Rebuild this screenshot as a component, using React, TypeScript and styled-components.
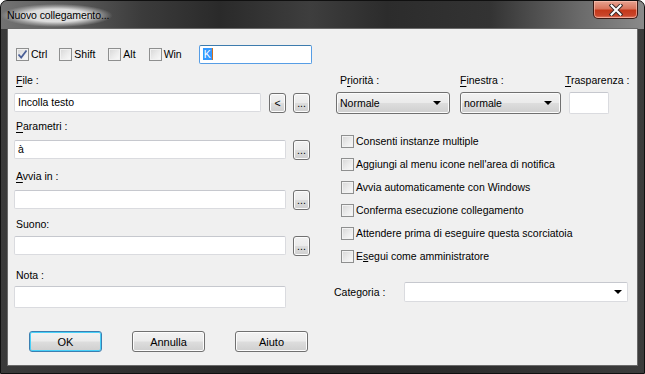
import React from 'react';
import styled, { createGlobalStyle } from 'styled-components';

const GlobalStyle = createGlobalStyle`
  html, body {
    margin: 0;
    padding: 0;
    background: #ffffff;
  }
  body {
    font-family: "Liberation Sans", Arial, sans-serif;
  }
`;

const FONT = `"Liberation Sans", Arial, sans-serif`;

const Window = styled.div`
  width: 645px;
  height: 374px;
  box-sizing: border-box;
  display: flex;
  flex-direction: column;
  border-radius: 7px 7px 0 0;
  border: 1px solid #101010;
  background: linear-gradient(90deg, #3a3a3a 0%, #262626 40%, #2c2c2c 70%, #3c3c3c 100%);
  overflow: hidden;
`;

const TitleBar = styled.div`
  height: 28px;
  flex: none;
  display: flex;
  justify-content: space-between;
  align-items: flex-start;
  background: linear-gradient(
    90deg,
    #727272 0%,
    #5e5e5e 10%,
    #3b3b3b 22%,
    #2a2a2a 34%,
    #3e3e3e 48%,
    #2c2c2c 60%,
    #333333 76%,
    #6a6a6a 90%,
    #8a8a8a 100%
  );
`;

const Title = styled.div`
  margin: 3px 0 0 0;
  padding: 5px 16px 6px 6px;
  font-family: ${FONT};
  font-size: 10.5px;
  letter-spacing: -0.1px;
  color: #000;
  background: radial-gradient(ellipse closest-side at 45% 50%, rgba(228, 228, 228, 0.95) 55%, rgba(200, 200, 200, 0.5) 80%, rgba(120, 120, 120, 0) 100%);
`;

const CloseButton = styled.div`
  width: 45px;
  height: 18px;
  margin-right: 6px;
  box-sizing: border-box;
  border: 1px solid #3b1a14;
  border-top: none;
  border-radius: 0 0 5px 5px;
  background: linear-gradient(180deg, #e7a391 0%, #d9755d 45%, #c4381a 55%, #c9452a 85%, #e0806a 100%);
  box-shadow: inset 0 0 0 1px rgba(255, 200, 185, 0.6);
  display: flex;
  align-items: center;
  justify-content: center;
`;

const Client = styled.div`
  flex: 1;
  margin: 0 7px 8px 7px;
  background: #f0f0f0;
  box-shadow: 0 0 0 1px #6a6a6a;
  padding: 16px 0 0 0;
  box-sizing: border-box;
  font-family: ${FONT};
  font-size: 10.5px;
  color: #000;
`;

const KeyRow = styled.div`
  display: flex;
  align-items: center;
  height: 19px;
  padding-left: 8px;
`;

const Check = styled.label<{ $gap?: number }>`
  display: flex;
  align-items: center;
  gap: 2px;
  margin-right: ${(p) => p.$gap ?? 12}px;
  line-height: 13px;
  white-space: nowrap;
`;

const Box = styled.span`
  width: 13px;
  height: 13px;
  box-sizing: border-box;
  flex: none;
  border: 1px solid #8e8f8f;
  background: linear-gradient(135deg, #d6d6d6 0%, #ececec 55%, #fafafa 100%);
  box-shadow: inset 0 0 0 1px #f2f2f2;
  display: flex;
  align-items: center;
  justify-content: center;
`;

const HotkeyInput = styled.div`
  width: 113px;
  height: 19px;
  box-sizing: border-box;
  margin-left: 5px;
  border: 1px solid #569de5;
  border-top-color: #3d7bad;
  border-radius: 2px;
  background: #fff;
  padding: 2px 3px;
  line-height: 13px;
`;

const Selected = styled.span`
  background: #3399ff;
  color: #fff;
  padding: 0 1px;
  border-right: 1px solid #d07020;
`;

const Columns = styled.div`
  display: grid;
  grid-template-columns: 296px 294px;
  column-gap: 24px;
  padding-left: 6px;
  margin-top: 10px;
`;

const Column = styled.div`
  display: flex;
  flex-direction: column;
`;

const Field = styled.div<{ $top?: number; $gap?: number }>`
  display: flex;
  flex-direction: column;
  gap: ${(p) => p.$gap ?? 6}px;
  margin-top: ${(p) => p.$top ?? 0}px;
`;

const Label = styled.div<{ $shift?: number }>`
  line-height: 13px;
  height: 13px;
  white-space: nowrap;
  padding-left: ${(p) => p.$shift ?? 2}px;
  u {
    text-decoration-thickness: 1px;
    text-underline-offset: 2px;
  }
`;

const InputRow = styled.div`
  display: flex;
  align-items: flex-start;
`;

const TextBox = styled.div<{ $w: number; $h?: number; $indent?: number }>`
  width: ${(p) => p.$w}px;
  height: ${(p) => p.$h ?? 19}px;
  margin-left: ${(p) => p.$indent ?? 0}px;
  box-sizing: border-box;
  border: 1px solid #dadbdf;
  border-top-color: #c6c8ce;
  border-radius: 2px;
  background: #fff;
  padding: 2px 3px;
  line-height: 13px;
  white-space: nowrap;
`;

const SmallButton = styled.div<{ $left: number }>`
  width: 17px;
  height: 20px;
  margin-left: ${(p) => p.$left}px;
  box-sizing: border-box;
  border: 1px solid #707070;
  border-radius: 3px;
  background: linear-gradient(180deg, #f2f2f2 0%, #ebebeb 48%, #dddddd 52%, #cfcfcf 100%);
  box-shadow: inset 0 0 0 1px #fcfcfc;
  display: flex;
  justify-content: center;
  align-items: center;
  line-height: 12px;
  font-size: 10.5px;
`;

const ButtonRow = styled.div`
  display: flex;
  gap: 30px;
  padding-left: 15px;
  margin-top: 23px;
`;

const Button = styled.div<{ $default?: boolean }>`
  width: 73px;
  height: 21px;
  box-sizing: border-box;
  border: 1px solid ${(p) => (p.$default ? '#3c7fb1' : '#707070')};
  border-radius: 3px;
  background: linear-gradient(180deg, #f2f2f2 0%, #ebebeb 48%, #dddddd 52%, #cfcfcf 100%);
  box-shadow: inset 0 0 0 1px ${(p) => (p.$default ? '#48d0f8' : '#fcfcfc')};
  display: flex;
  align-items: center;
  justify-content: center;
  font-size: 11px;
`;

const ModeRow = styled.div`
  display: flex;
`;

const ModeGroup = styled.div<{ $left: number }>`
  display: flex;
  flex-direction: column;
  gap: 5px;
  margin-left: ${(p) => p.$left}px;
`;

const DropDown = styled.div<{ $w: number }>`
  width: ${(p) => p.$w}px;
  height: 22px;
  box-sizing: border-box;
  border: 1px solid #707070;
  border-radius: 3px;
  background: linear-gradient(180deg, #f2f2f2 0%, #ebebeb 48%, #dddddd 52%, #cfcfcf 100%);
  box-shadow: inset 0 0 0 1px #fbfbfb;
  display: flex;
  align-items: center;
  justify-content: space-between;
  padding: 0 8px 0 3px;
  line-height: 13px;
`;

const Arrow = styled.span`
  width: 0;
  height: 0;
  border-left: 4px solid transparent;
  border-right: 4px solid transparent;
  border-top: 4px solid #000;
`;

const Options = styled.div`
  display: flex;
  flex-direction: column;
  gap: 10px;
  margin-top: 21px;
  padding-left: 7px;
`;

const CategoryRow = styled.div`
  display: flex;
  align-items: center;
  margin-top: 19px;
`;

const CategoryLabel = styled.div`
  width: 70px;
  line-height: 13px;
`;

const CategoryBox = styled.div`
  width: 224px;
  height: 20px;
  box-sizing: border-box;
  border: 1px solid #dadbdf;
  border-top-color: #c6c8ce;
  border-radius: 2px;
  background: #fff;
  display: flex;
  align-items: center;
  justify-content: flex-end;
  padding-right: 5px;
`;

const Tick = () => (
  <svg width="11" height="11" viewBox="0 0 11 11">
    <path d="M1.5 5.5 L4.2 8.5 L9.5 1.5" fill="none" stroke="#4a5f97" strokeWidth="1.8" />
  </svg>
);

const CloseGlyph = () => (
  <svg width="14" height="12" viewBox="0 0 14 12">
    <path d="M2.5 1.5 L11.5 10.5 M11.5 1.5 L2.5 10.5" stroke="#3a2a28" strokeWidth="4" strokeLinecap="square" />
    <path d="M2.5 1.5 L11.5 10.5 M11.5 1.5 L2.5 10.5" stroke="#ffffff" strokeWidth="2" strokeLinecap="square" />
  </svg>
);

const CheckItem = ({ text, checked, gap }: { text: React.ReactNode; checked?: boolean; gap?: number }) => (
  <Check $gap={gap}>
    <Box>{checked && <Tick />}</Box>
    <span>{text}</span>
  </Check>
);

const options: React.ReactNode[] = [
  'Consenti instanze multiple',
  "Aggiungi al menu icone nell'area di notifica",
  'Avvia automaticamente con Windows',
  'Conferma esecuzione collegamento',
  'Attendere prima di eseguire questa scorciatoia',
  <>
    E<u>s</u>egui come amministratore
  </>,
];

export default function App() {
  return (
    <>
      <GlobalStyle />
      <Window>
        <TitleBar>
          <Title>Nuovo collegamento...</Title>
          <CloseButton>
            <CloseGlyph />
          </CloseButton>
        </TitleBar>
        <Client>
          <KeyRow>
            <CheckItem text="Ctrl" checked />
            <CheckItem text="Shift" gap={13} />
            <CheckItem text="Alt" gap={13} />
            <CheckItem text="Win" gap={12} />
            <HotkeyInput>
              <Selected>K</Selected>
            </HotkeyInput>
          </KeyRow>

          <Columns>
            <Column>
              <Field>
                <Label>
                  <u>F</u>ile :
                </Label>
                <InputRow>
                  <TextBox $w={248}>Incolla testo</TextBox>
                  <SmallButton $left={8}>&lt;</SmallButton>
                  <SmallButton $left={7}>...</SmallButton>
                </InputRow>
              </Field>
              <Field $top={7} $gap={7}>
                <Label>
                  <u>P</u>arametri :
                </Label>
                <InputRow>
                  <TextBox $w={272}>à</TextBox>
                  <SmallButton $left={7}>...</SmallButton>
                </InputRow>
              </Field>
              <Field $top={10} $gap={7}>
                <Label>
                  <u>A</u>vvia in :
                </Label>
                <InputRow>
                  <TextBox $w={272} />
                  <SmallButton $left={7}>...</SmallButton>
                </InputRow>
              </Field>
              <Field $top={8} $gap={5}>
                <Label>Suono:</Label>
                <InputRow>
                  <TextBox $w={272} />
                  <SmallButton $left={7}>...</SmallButton>
                </InputRow>
              </Field>
              <Field $top={13} $gap={4}>
                <Label>Nota :</Label>
                <TextBox $w={272} $h={22} />
              </Field>
              <ButtonRow>
                <Button $default>OK</Button>
                <Button>Annulla</Button>
                <Button>Aiuto</Button>
              </ButtonRow>
            </Column>

            <Column>
              <ModeRow>
                <ModeGroup $left={2}>
                  <Label $shift={4}>
                    P<u>r</u>iorità :
                  </Label>
                  <DropDown $w={114}>
                    <span>Normale</span>
                    <Arrow />
                  </DropDown>
                </ModeGroup>
                <ModeGroup $left={10}>
                  <Label $shift={0}>
                    <u>F</u>inestra :
                  </Label>
                  <DropDown $w={101}>
                    <span>normale</span>
                    <Arrow />
                  </DropDown>
                </ModeGroup>
                <ModeGroup $left={4}>
                  <Label $shift={0}>
                    <u>T</u>rasparenza :
                  </Label>
                  <TextBox $w={40} $h={22} $indent={4} />
                </ModeGroup>
              </ModeRow>
              <Options>
                {options.map((text, i) => (
                  <CheckItem key={i} text={text} />
                ))}
              </Options>
              <CategoryRow>
                <CategoryLabel>Categoria :</CategoryLabel>
                <CategoryBox>
                  <Arrow />
                </CategoryBox>
              </CategoryRow>
            </Column>
          </Columns>
        </Client>
      </Window>
    </>
  );
}
